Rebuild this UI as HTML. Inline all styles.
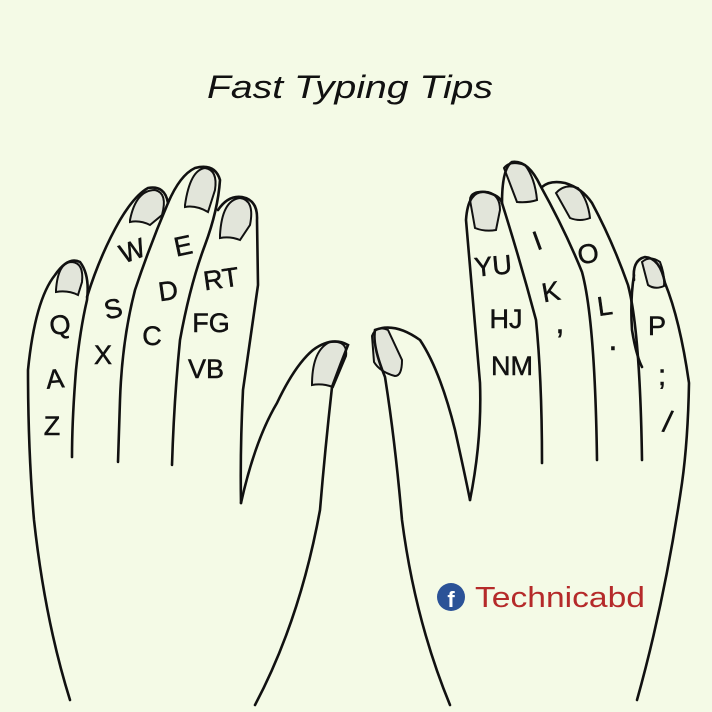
<!DOCTYPE html>
<html><head><meta charset="utf-8"><style>
html,body{margin:0;padding:0;background:#f4fae6;}
svg{display:block}
</style></head><body>
<svg width="712" height="712" viewBox="0 0 712 712" xmlns="http://www.w3.org/2000/svg">
<rect width="712" height="712" fill="#f4fae6"/>
<text x="207" y="98" font-family="Liberation Sans, sans-serif" font-style="italic" font-size="32" textLength="286" lengthAdjust="spacingAndGlyphs" fill="#111">Fast Typing Tips</text>
<g fill="#e2e5da" stroke="#111" stroke-width="2">
<path d="M56 290 Q58 262 72 262 Q84 263 82 282 L78 295 Q68 290 56 292Z"/>
<path d="M130 220 Q136 190 155 190 Q168 193 162 215 L150 225 Q140 220 130 222Z"/>
<path d="M185 205 Q190 170 205 168 Q218 170 215 190 L208 212 Q196 205 185 207Z"/>
<path d="M220 235 Q222 200 240 198 Q255 200 250 225 L240 240 Q230 236 220 238Z"/>
<path d="M312 385 Q312 350 330 342 Q348 340 346 356 L333 387 Q322 383 312 385Z"/>
<path d="M372 336 Q376 325 388 330 L402 360 Q402 376 395 376 Q380 372 374 362Z"/>
<path d="M470 200 Q470 190 488 192 Q500 195 500 210 L496 230 Q485 232 475 228Z"/>
<path d="M504 168 Q510 160 525 165 Q535 178 537 200 Q528 203 517 202Z"/>
<path d="M556 193 Q565 183 578 188 Q588 200 590 218 Q580 222 570 218Z"/>
<path d="M642 262 Q650 255 660 262 Q665 275 664 286 Q655 290 648 285Z"/>
</g>
<g fill="none" stroke="#111" stroke-width="2.6" stroke-linecap="round">
<path d="M70 700 Q45 620 34 520 Q28 450 28 370 Q35 300 55 275 Q68 256 80 262 Q90 275 87 300 Q80 330 76 370 Q72 420 72 457"/>
<path d="M87 297 Q100 255 120 220 Q135 195 148 188 Q165 185 168 203 Q150 245 135 290 Q122 340 120 400 L118 462"/>
<path d="M168 203 Q180 175 195 168 Q215 163 220 180 Q218 210 205 245 Q190 285 180 340 Q174 400 172 465"/>
<path d="M218 210 Q228 195 242 197 Q258 200 257 220 L258 285 Q250 340 243 390 Q240 450 241 503"/>
<path d="M241 503 Q255 440 277 403 Q295 365 313 350 Q332 336 348 345 Q340 365 332 387 Q325 450 320 510 Q300 620 255 705"/>
<path d="M450 705 Q415 620 402 520 Q395 440 385 377 Q372 345 375 330 Q395 322 420 340 Q440 370 455 430 Q465 475 470 500"/>
<path d="M470 500 Q482 440 480 383 Q472 290 466 220 Q468 190 485 192 Q500 195 502 203 Q520 260 536 320 Q542 380 542 463"/>
<path d="M502 203 Q502 168 512 162 Q528 160 540 185 Q565 230 582 272 Q595 320 597 460"/>
<path d="M542 187 Q550 180 565 183 Q582 188 592 203 Q612 240 628 285 Q640 330 642 460"/>
<path d="M634 280 Q632 260 645 257 Q660 258 665 283 Q680 320 689 383 Q688 440 682 483 Q665 600 637 700"/>
<path d="M634 275 Q630 300 632 330 Q636 355 642 367"/>
</g>
<g font-family="Liberation Sans, sans-serif" font-size="27" fill="#111" text-anchor="middle" stroke="#111" stroke-width="0.5">
<text x="60" y="334" transform="rotate(-8 60 325)">Q</text>
<text x="55" y="388" transform="rotate(-5 55 378)">A</text>
<text x="52" y="435">Z</text>
<text x="132" y="260" transform="rotate(-20 132 250)">W</text>
<text x="113" y="318" transform="rotate(-12 113 308)">S</text>
<text x="103" y="364">X</text>
<text x="183" y="255" transform="rotate(-12 183 245)">E</text>
<text x="168" y="300" transform="rotate(-8 168 290)">D</text>
<text x="152" y="345">C</text>
<text x="221" y="288" transform="rotate(-8 221 278)">RT</text>
<text x="211" y="332">FG</text>
<text x="206" y="378">VB</text>
<text x="493" y="275" transform="rotate(-5 493 265)">YU</text>
<text x="506" y="328">HJ</text>
<text x="512" y="375">NM</text>
<text x="537" y="250" transform="rotate(-20 537 240)">I</text>
<text x="551" y="301" transform="rotate(-10 551 292)">K</text>
<text x="560" y="333" font-size="32">,</text>
<text x="613" y="350" font-size="32">.</text>
<text x="588" y="263" transform="rotate(-10 588 253)">O</text>
<text x="605" y="315" transform="rotate(-8 605 307)">L</text>
<text x="657" y="335">P</text>
<text x="662" y="385" font-size="30">;</text>
<text x="668" y="432" transform="rotate(10 668 420)" font-size="30">/</text>
</g>
<circle cx="451" cy="597" r="14" fill="#2b5297"/>
<text x="451" y="607" font-family="Liberation Sans, sans-serif" font-weight="bold" font-size="22" fill="#fff" text-anchor="middle">f</text>
<text x="475" y="607" font-family="Liberation Sans, sans-serif" font-size="29" fill="#b52a2a" textLength="170" lengthAdjust="spacingAndGlyphs">Technicabd</text>
</svg>
</body></html>
